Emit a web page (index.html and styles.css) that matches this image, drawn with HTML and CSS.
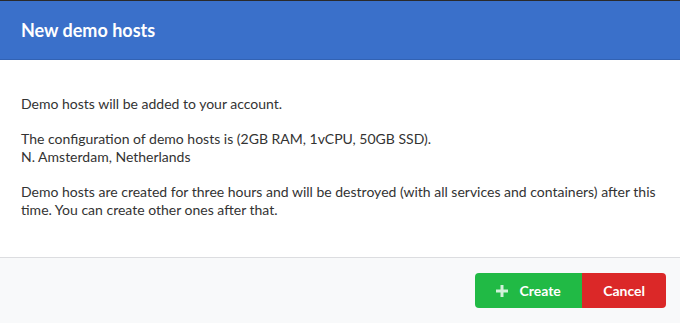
FILE: index.html
```
<!DOCTYPE html>
<html lang="en">
<head>
    <meta charset="UTF-8">
    <meta name="viewport" content="width=device-width, initial-scale=1.0">
    <title>New demo hosts</title>
    <link rel="stylesheet" href="styles.css">
</head>
<body>
<div class="modal">
    <div class="header">New demo hosts</div>
    <div class="content">
        <p>Demo hosts will be added to your account.</p>
        <p>The configuration of demo hosts is (2GB RAM, 1vCPU, 50GB SSD).<br>
            N. Amsterdam, Netherlands</p>
        <p>Demo hosts are created for three hours and will be destroyed (with all services and containers) after this time. You can create other ones after that.</p>
    </div>
    <div class="actions">
        <div class="buttons">
            <button type="button" class="btn green">
                <svg class="icon" viewBox="0 0 12 12" width="12" height="12">
                    <path d="M4.5 0h3v4.5H12v3H7.5V12h-3V7.5H0v-3h4.5z" fill="currentColor"/>
                </svg>
                Create
            </button>
            <button type="button" class="btn red">Cancel</button>
        </div>
    </div>
</div>
</body>
</html>
```

FILE: styles.css
```
html, body {
    height: 100%;
}
body {
    margin: 0;
    font-family: Lato, "Open Sans", sans-serif;
    font-size: 14px;
    color: #333;
    background: #fff;
}
.modal {
    height: 100%;
    display: flex;
    flex-direction: column;
    border-top: 1px solid #2a2a2a;
    box-sizing: border-box;
}
.header {
    background: #3a70ca;
    color: #fff;
    font-weight: 700;
    font-size: 18px;
    line-height: 24px;
    padding: 17px 21px;
    border-bottom: 1px solid #3262b3;
}
.content {
    flex: 1;
    padding: 35px 21px 0;
}
.content p {
    margin: 0 0 17px;
    line-height: 18px;
}
.actions {
    background: #f8f9fa;
    border-top: 1px solid #dcdde0;
    padding: 15px 14px 15px;
    display: flex;
    justify-content: flex-end;
}
.buttons {
    display: flex;
}
.btn {
    font-family: inherit;
    font-size: 14px;
    font-weight: 700;
    line-height: 15px;
    color: #fff;
    border: none;
    padding: 10px 21px;
    cursor: pointer;
    display: flex;
    align-items: center;
}
.green {
    background: #21ba45;
    border-radius: 4px 0 0 4px;
    width: 107px;
    justify-content: center;
}
.red {
    background: #db2828;
    border-radius: 0 4px 4px 0;
}
.icon {
    color: rgba(255,255,255,0.8);
    margin-right: 11px;
}
```
